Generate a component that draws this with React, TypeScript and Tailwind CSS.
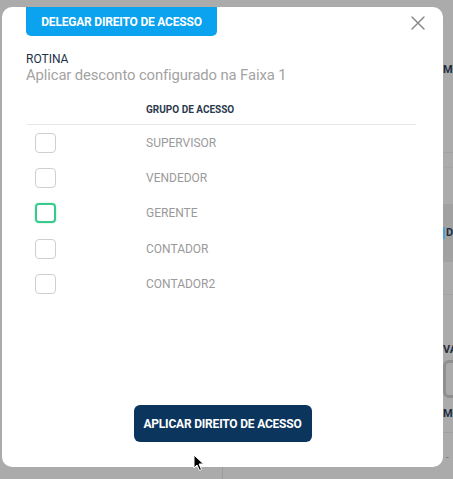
import React from "react";

const groups = ["SUPERVISOR", "VENDEDOR", "GERENTE", "CONTADOR", "CONTADOR2"];

export default function App() {
  return (
    <div
      className="relative w-[453px] h-[479px] overflow-hidden bg-[#ababab]"
      style={{ fontFamily: "Roboto, 'Liberation Sans', sans-serif" }}
    >
      {/* background app (dimmed) */}
      <div className="flex h-full">
        <div className="w-[443px] shrink-0 h-full flex flex-col">
          <div className="flex-1" />
          <div className="h-[12px] flex">
            <div className="w-[222px]" />
            <div className="border-l border-[#9c9c9c]" />
          </div>
        </div>
        <div className="flex-1 min-w-0 flex flex-col text-[11px] font-bold text-[#1f2d3d]">
          <div className="h-[7px]" />
          <div className="mt-[57px] leading-[12px] whitespace-nowrap">MIS</div>
          <div className="mt-[76px] border-t border-[#a2a2a2]" />
          <div className="mt-[14px] border-t border-[#a5a5a5]" />
          <div className="mt-[36px] h-[58px] bg-[#a1a1a1] flex items-center whitespace-nowrap">
            <span className="w-[2px] h-[12px] bg-[#4aa3d8] mr-[1px] shrink-0" />D
          </div>
          <div className="mt-[32px] border-t border-[#a3a3a3]" />
          <div className="mt-[49px] leading-[12px] whitespace-nowrap">VA</div>
          <div className="mt-[4px] h-[38px] w-[30px] border-[3px] border-[#8f8f8f] rounded-[6px]" />
          <div className="mt-[10px] leading-[12px] whitespace-nowrap">MO</div>
          <div className="mt-[12px] border-t border-[#a0a0a0]" />
          <div className="mt-[22px] text-[#777] font-normal leading-[6px] whitespace-nowrap">&nbsp;-</div>
        </div>
      </div>

      {/* modal */}
      <div className="absolute left-[2px] top-[7px] w-[441px] h-[460px] bg-white rounded-[10px] flex flex-col pl-[24px] pr-[27px]">
        <div className="flex justify-between items-start">
          <div className="w-[191px] h-[29px] bg-[#0ba3ef] rounded-b-[5px] flex items-center justify-center text-white font-bold text-[12px] tracking-[-0.2px]">
            DELEGAR DIREITO DE ACESSO
          </div>
          <svg width="16" height="16" viewBox="0 0 16 16" className="mt-[8px] mr-[-10px]">
            <path d="M2 2 L14 14 M14 2 L2 14" stroke="#8a8a8a" strokeWidth="1.5" strokeLinecap="round" />
          </svg>
        </div>
        <div className="mt-[16px] text-[12px] leading-[14px] text-[#1c2f47]">ROTINA</div>
        <div className="text-[14.8px] leading-[18px] text-[#a3a3a3] tracking-[-0.1px]">
          Aplicar desconto configurado na Faixa 1
        </div>
        <div className="mt-[20px] flex">
          <div className="w-[120px]" />
          <div className="text-[10px] font-bold leading-[12px] text-[#2b3a4e]">GRUPO DE ACESSO</div>
        </div>
        <div className="mt-[8px] ml-[1px] border-t border-[#e6e6e6]" />
        <div className="flex flex-col">
          {groups.map((g) => (
            <div key={g} className="flex items-center h-[35.3px]">
              <div className="w-[120px] pl-[9px]">
                {g === "GERENTE" ? (
                  <div className="w-[21px] h-[20px] rounded-[4px] border-2 border-[#38c98e] shadow-[0_0_2px_#9be3c3]" />
                ) : (
                  <div className="w-[21px] h-[20px] rounded-[4px] border-[1.5px] border-[#cfcfcf]" />
                )}
              </div>
              <div className="text-[12px] text-[#9a9a9a]">{g}</div>
            </div>
          ))}
        </div>
        <div className="flex-1" />
        <div className="flex justify-center pl-[3px] mb-[25px]">
          <div className="w-[178px] h-[37px] bg-[#0c355e] rounded-[6px] flex items-center justify-center text-white font-bold text-[12px] tracking-[-0.2px]">
            APLICAR DIREITO DE ACESSO
          </div>
        </div>
      </div>

      {/* mouse cursor */}
      <svg className="absolute left-[193px] top-[454px]" width="12" height="18" viewBox="0 0 12 18">
        <path d="M1 1 L1 14 L4 11 L6.5 16.5 L8.5 15.5 L6 10 L10.5 10 Z" fill="#000" stroke="#fff" strokeWidth="1" />
      </svg>
    </div>
  );
}
